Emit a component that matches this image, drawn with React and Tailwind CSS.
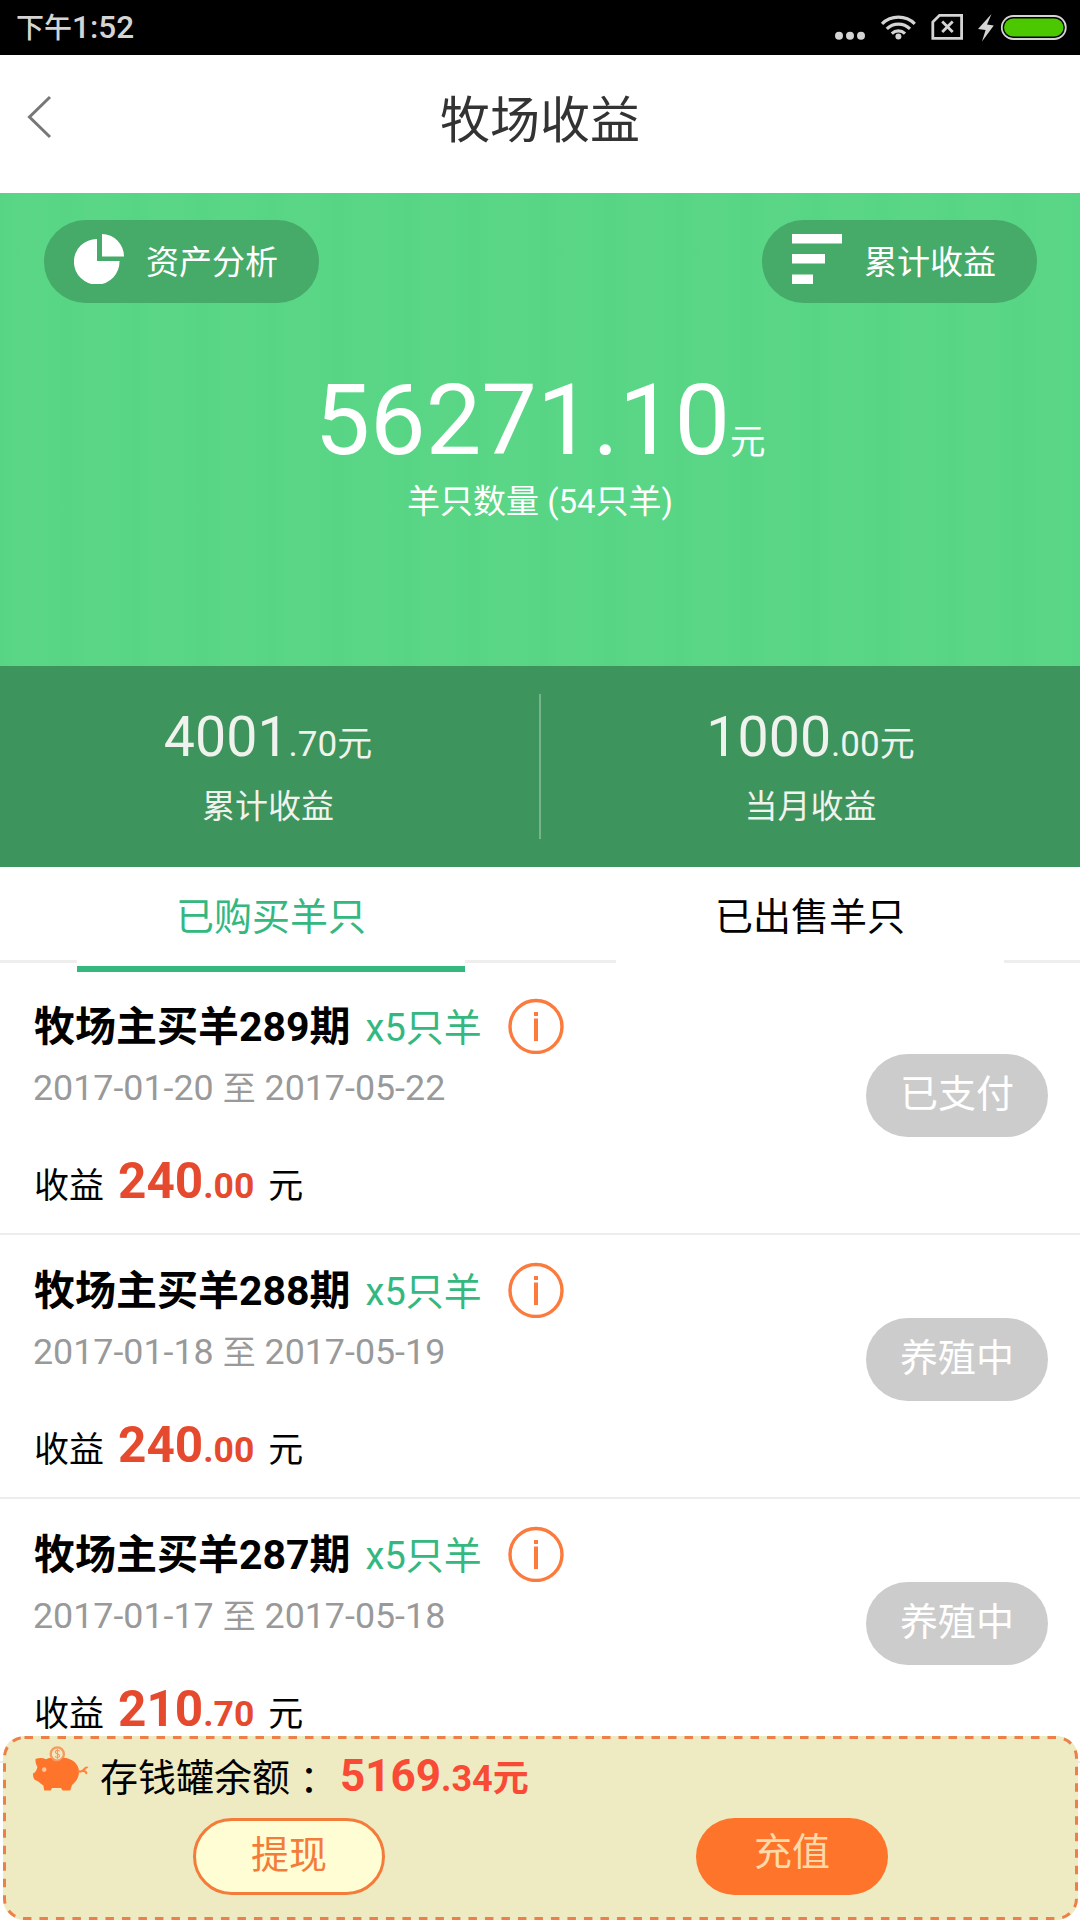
import React from "react";

const FONT = "font-[Roboto,'Noto_Sans_CJK_SC',sans-serif]";

function StatusIcons() {
  return (
    <svg className="block h-[45px] w-[250px]" viewBox="825 5 250 45" fill="none">
      <g fill="#d4d4d4">
        <circle cx="839" cy="35.7" r="4" />
        <circle cx="850" cy="35.7" r="4" />
        <circle cx="861" cy="35.7" r="4" />
        <circle cx="898.4" cy="36.6" r="3" />
        <path d="M991.5 14 L978 29 L985.6 30 L982 41.5 L993.8 25.6 L987 24.6 Z" />
      </g>
      <g stroke="#d4d4d4" strokeWidth="3.2">
        <path d="M882 23.8 A23.5 23.5 0 0 1 914.8 23.8" />
        <path d="M886.8 28.8 A16.5 16.5 0 0 1 910 28.8" />
        <path d="M891.8 33.6 A9.6 9.6 0 0 1 905 33.6" />
        <path d="M932.8 38.4 V22 L939.5 15.3 H961.6 V38.4 Z" strokeWidth="2.8" />
        <path d="M942.2 21.5 L952.7 32 M952.7 21.5 L942.2 32" strokeWidth="2.8" />
      </g>
      <rect x="1001.8" y="16" width="64" height="23" rx="11.5" stroke="#d4d4d4" strokeWidth="1.8" />
      <rect x="1004" y="18.5" width="59.5" height="18" rx="9" fill="#4cc800" />
    </svg>
  );
}

function PieIcon() {
  return (
    <svg className="h-[50px] w-[50px]" viewBox="0 0 50 50" fill="#fff">
      <path d="M23 5 V27 H45.5 A22.8 22.8 0 1 1 23 5 Z" />
      <path d="M28 0 A22.5 22.5 0 0 1 50 22.5 H28 Z" />
    </svg>
  );
}

function BarsIcon() {
  return (
    <svg className="h-[50px] w-[50px]" viewBox="0 0 50 50" fill="#fff">
      <path d="M0 0 H50 V9.5 H0 Z M0 20 H33 V29.5 H0 Z M0 40.5 H21 V50 H0 Z" />
    </svg>
  );
}

function InfoIcon() {
  return (
    <svg className="h-[56px] w-[56px]" viewBox="0 0 56 56" fill="none">
      <circle cx="28" cy="28.5" r="26" stroke="#fb7a3c" strokeWidth="3.4" />
      <path d="M28 14 V18 M28 20.5 V43" stroke="#fb7a3c" strokeWidth="4" />
    </svg>
  );
}

function PiggyIcon() {
  return (
    <svg className="h-[46px] w-[56px]" viewBox="33 1746 56 46" fill="none">
      <circle cx="57.3" cy="1754" r="6.6" stroke="#f79a62" strokeWidth="2.4" />
      <path
        d="M59.6 1751.3 C58.5 1749.8 55.2 1750 55.2 1752 C55.2 1754.2 59.6 1753.4 59.6 1755.8 C59.6 1757.8 56 1758 55 1756.3 M57.4 1748.8 V1759"
        stroke="#f79a62"
        strokeWidth="1.1"
      />
      <path
        d="M35.5 1759 C39 1757.6 43 1757.8 46 1759.2 C48.5 1758.2 50.5 1757.8 51.5 1758.4 C54 1762.4 60.5 1762.4 63 1757.8 C72 1758 79 1764 79 1771.5 C79 1777.5 76 1781.8 72 1785 L70.2 1790.5 H62.5 L61 1788 H52 L50.8 1790.5 H44.2 L43.4 1785.6 C40 1783.6 39 1781.6 36.8 1780.8 C33.6 1779.6 33 1777.8 33 1773.6 C35.8 1772.2 36.6 1770.4 37.4 1767 C36 1764.6 35.3 1762 35.5 1759 Z"
        fill="#ff742b"
      />
      <circle cx="44.2" cy="1769.6" r="2.3" fill="#ffc59a" />
      <path
        d="M78 1770.8 C80.5 1772.5 82 1771.5 84 1769.5 C85.5 1767.6 87 1767.2 87.5 1768 M82.5 1771 C85.5 1771 87 1772.4 86 1774"
        stroke="#ff8440"
        strokeWidth="2.2"
      />
    </svg>
  );
}

function HeroPill({ icon, label }) {
  return (
    <div className="flex h-[83px] w-[275px] items-center rounded-full bg-[#46aa68] pl-[30px]">
      <div className="mb-[5px]">{icon}</div>
      <span className="mt-[2px] ml-[22px] text-[33px] leading-[42px] text-white">{label}</span>
    </div>
  );
}

function Stat({ whole, cents, label }) {
  return (
    <div className="flex flex-col items-center pt-[42px] text-[#f0f2ed]">
      <div className="h-[60px] text-[55.5px] leading-[60px] whitespace-nowrap">
        {whole}
        <span className="text-[35px] leading-[0]">.{cents}元</span>
      </div>
      <div className="mt-[19px] text-[33px] leading-[40px]">{label}</div>
    </div>
  );
}

function Order({ name, count, dates, whole, cents, status }) {
  return (
    <div className="flex h-[264px] shrink-0 items-start justify-between border-b-2 border-[#ededed] pr-[32px] pl-[33px]">
      <div className="pt-[27px]">
        <div className="flex h-[56px] items-center">
          <div className="mt-[1px] ml-[1px] text-[41px] leading-[56px] font-bold whitespace-nowrap text-black">
            {name}
            <span className="ml-[15px] text-[38px] leading-[0] font-normal text-[#34b880]">{count}</span>
          </div>
          <div className="ml-[26px]">
            <InfoIcon />
          </div>
        </div>
        <div className="mt-[12px] h-[44px] text-[35.8px] leading-[44px] whitespace-nowrap text-[#999999]">
          {dates[0]} <span className="text-[33px] leading-[0]">至</span> {dates[1]}
        </div>
        <div className="mt-[41px] ml-[1px] h-[60px] text-[50px] leading-[60px] font-bold whitespace-nowrap text-[#e64a2e]">
          <span className="text-[35px] leading-[0] font-normal text-black">收益</span>
          <span className="ml-[14px] text-[49.5px] leading-[0]">{whole}</span>
          <span className="text-[35.5px] leading-[0]">.{cents}</span>
          <span className="ml-[14px] text-[35px] leading-[0] font-normal text-black">元</span>
        </div>
      </div>
      <div className="mt-[83px] flex h-[83px] w-[182px] items-center justify-center rounded-full bg-[#cccccc] pb-[4px] text-[38px] leading-[48px] text-white">
        {status}
      </div>
    </div>
  );
}

const orders = [
  { name: "牧场主买羊289期", count: "x5只羊", dates: ["2017-01-20", "2017-05-22"], whole: "240", cents: "00", status: "已支付" },
  { name: "牧场主买羊288期", count: "x5只羊", dates: ["2017-01-18", "2017-05-19"], whole: "240", cents: "00", status: "养殖中" },
  { name: "牧场主买羊287期", count: "x5只羊", dates: ["2017-01-17", "2017-05-18"], whole: "210", cents: "70", status: "养殖中" },
];

export default function App() {
  return (
    <div lang="zh-CN" className={"relative flex h-[1920px] w-[1080px] flex-col overflow-hidden bg-white " + FONT}>
      <div className="flex h-[55px] shrink-0 items-center justify-between bg-black pr-[5px] pl-[16px] text-[#d4d4d4]">
        <div className="pt-[1px] text-[31.5px] leading-[40px] font-medium">
          <span className="text-[28px] leading-[0]">下午</span>1:52
        </div>
        <StatusIcons />
      </div>

      <header className="grid h-[138px] shrink-0 grid-cols-[1fr_auto_1fr] items-center bg-white pb-[7px]">
        <svg className="mb-[7px] ml-[26px] h-[44px] w-[26px]" viewBox="0 0 26 44" fill="none">
          <path d="M24 2 L3.5 22 L24 42" stroke="#777777" strokeWidth="3" />
        </svg>
        <h1 className="text-[50px] leading-[60px] text-[#333333]">牧场收益</h1>
      </header>

      <section className="flex h-[674px] shrink-0 flex-col bg-[#59d685] text-white">
        <div className="flex h-[473px] flex-col bg-[repeating-linear-gradient(90deg,#57d585_0px,#5ad686_28px,#57d585_68px)]">
          <div className="flex justify-between pt-[27px] pr-[43px] pl-[44px]">
            <HeroPill icon={<PieIcon />} label="资产分析" />
            <HeroPill icon={<BarsIcon />} label="累计收益" />
          </div>
          <div className="mt-[57px] text-center text-[99px] leading-[120px]">
            56271.10<span className="text-[35.5px] leading-[0]">元</span>
          </div>
          <div className="text-center text-[33px] leading-[43px]">羊只数量 (54只羊)</div>
        </div>
        <div className="flex h-[201px] items-start bg-[#3d945c]">
          <div className="w-[539px] pr-[3px]">
            <Stat whole="4001" cents="70" label="累计收益" />
          </div>
          <div className="mt-[28px] h-[145px] w-[2px] bg-[#77b48c]" />
          <div className="w-[539px]">
            <Stat whole="1000" cents="00" label="当月收益" />
          </div>
        </div>
      </section>

      <nav className="flex h-[105px] shrink-0 items-start">
        <div className="h-[96px] w-[77px] border-b-3 border-[#eeeeee]" />
        <div className="h-[105px] w-[388px] border-b-6 border-[#34b880] text-center text-[38px] leading-[100px] text-[#34b880]">
          已购买羊只
        </div>
        <div className="h-[96px] w-[151px] border-b-3 border-[#eeeeee]" />
        <div className="h-[105px] w-[388px] text-center text-[38px] leading-[100px] text-black">已出售羊只</div>
        <div className="h-[96px] w-[76px] border-b-3 border-[#eeeeee]" />
      </nav>

      <main className="-mt-px flex flex-col">
        {orders.map((order) => (
          <Order key={order.name} {...order} />
        ))}
      </main>

      <footer className="absolute top-[1736px] left-[3px] h-[184px] w-[1075px] rounded-[21px] bg-[#eeebc3]">
        <svg className="absolute inset-0 h-[184px] w-[1075px]" viewBox="0 0 1075 184" fill="none">
          <rect x="1.5" y="1.5" width="1072" height="181" rx="20" stroke="#ec8048" strokeWidth="3" strokeDasharray="8.5 8" />
        </svg>
        <div className="relative flex items-start pl-[30px]">
          <div className="pt-[10px]">
            <PiggyIcon />
          </div>
          <div className="mt-[10px] ml-[11px] h-[60px] text-[44px] leading-[60px] font-bold whitespace-nowrap text-[#f84a34]">
            <span className="text-[38px] leading-[0] font-normal text-black">
              存钱罐余额
              <span className="relative top-[3px] font-['Noto_Sans_CJK_TC',sans-serif]" lang="zh-TW">：</span>
            </span>
            <span className="ml-[12px]">5169</span>
            <span className="text-[36px] leading-[0]">.34元</span>
          </div>
        </div>
        <div className="relative mt-[12px] flex gap-[311px] pl-[190px] text-[38px] leading-[48px]">
          <button className="flex h-[77px] w-[192px] items-center justify-center rounded-full border-3 border-[#f47c3a] bg-[#fffdd3] pb-[4px] text-[#f47c3a]">
            提现
          </button>
          <button className="flex h-[77px] w-[192px] items-center justify-center rounded-full bg-[#ff742b] pb-[9px] text-[#ffd9a8]">
            充值
          </button>
        </div>
      </footer>
    </div>
  );
}
